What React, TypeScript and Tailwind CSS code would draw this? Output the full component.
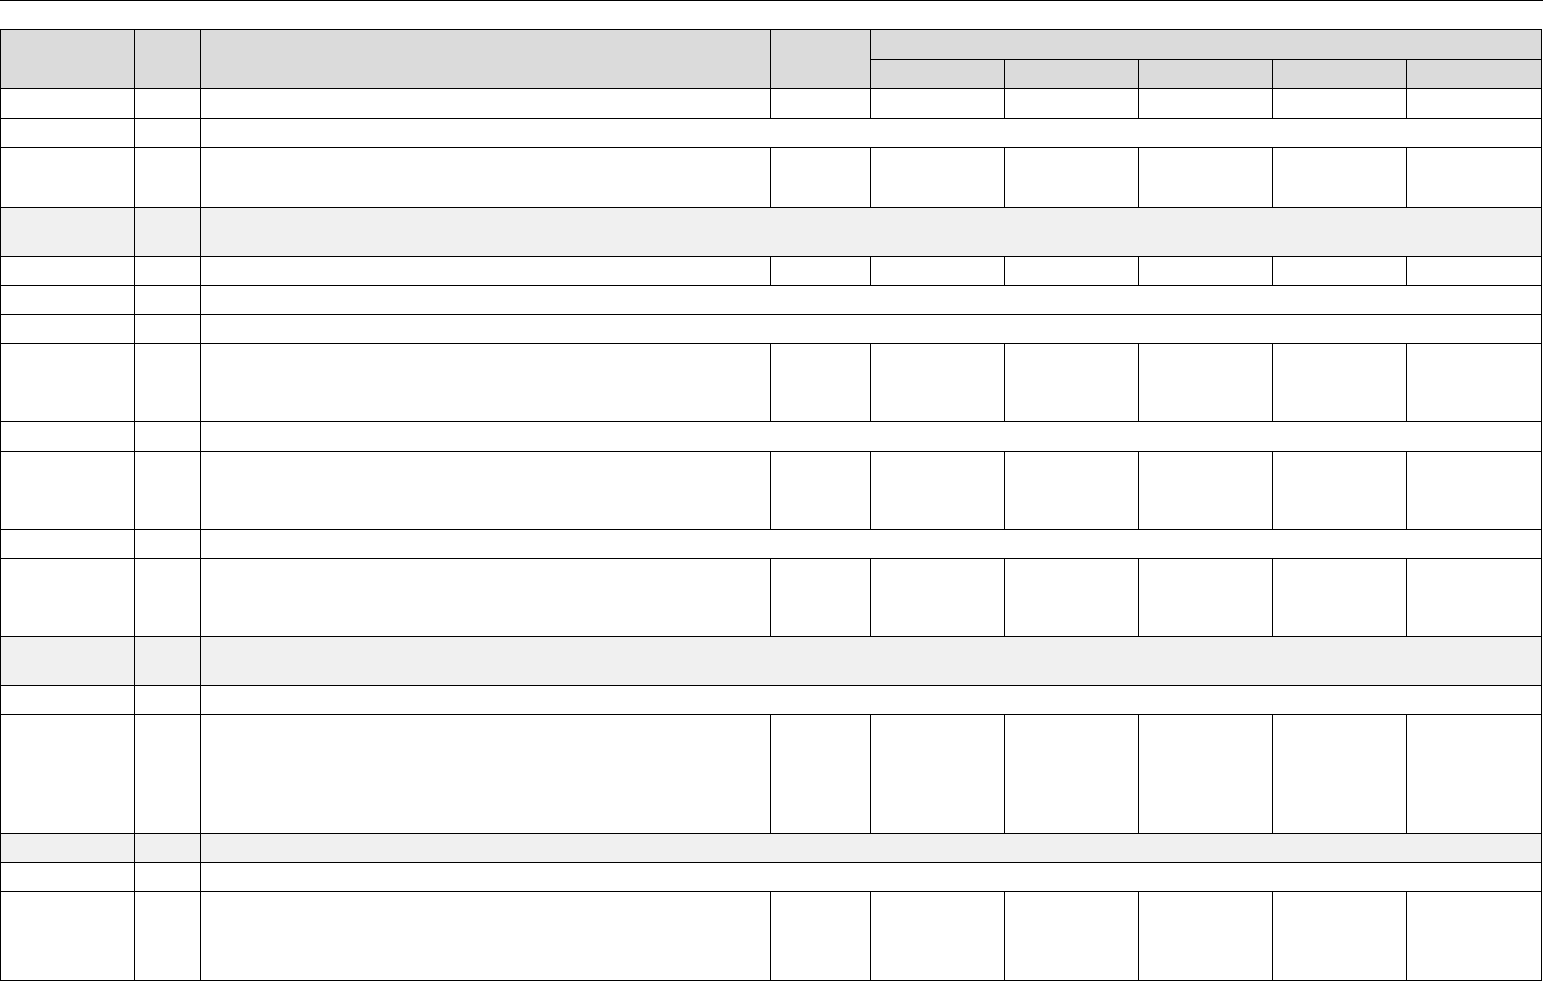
import React from "react";

// row kinds: "full" = every column has its own cell, "span" = first two cells then one wide cell
type Row = { h: number; kind: "full" | "span"; shaded?: boolean };

const rows: Row[] = [
  { h: 30, kind: "full" },
  { h: 29, kind: "span" },
  { h: 60, kind: "full" },
  { h: 49, kind: "span", shaded: true },
  { h: 29, kind: "full" },
  { h: 29, kind: "span" },
  { h: 29, kind: "span" },
  { h: 78, kind: "full" },
  { h: 30, kind: "span" },
  { h: 78, kind: "full" },
  { h: 29, kind: "span" },
  { h: 78, kind: "full" },
  { h: 49, kind: "span", shaded: true },
  { h: 29, kind: "span" },
  { h: 119, kind: "full" },
  { h: 29, kind: "span", shaded: true },
  { h: 29, kind: "span" },
  { h: 89, kind: "full" },
];

const colWidths = [134, 66, 570, 100, 134, 134, 134, 134, 135];

const cell = "border border-black p-0";

export default function App() {
  return (
    <div className="w-[1544px] bg-white font-['Liberation_Sans',Arial,sans-serif] text-sm text-black">
      {/* top rule */}
      <div className="h-px w-[1543px] bg-black" />

      <table className="mt-[28px] w-[1541px] table-fixed border-collapse">
        <colgroup>
          {colWidths.map((w, i) => (
            <col key={i} style={{ width: w }} />
          ))}
        </colgroup>

        <thead className="bg-[#dbdbdb]">
          <tr className="h-[30px]">
            <th rowSpan={2} className={cell} />
            <th rowSpan={2} className={cell} />
            <th rowSpan={2} className={cell} />
            <th rowSpan={2} className={cell} />
            <th colSpan={5} className={cell} />
          </tr>
          <tr className="h-[29px]">
            <th className={cell} />
            <th className={cell} />
            <th className={cell} />
            <th className={cell} />
            <th className={cell} />
          </tr>
        </thead>

        <tbody>
          {rows.map((row, i) => (
            <tr
              key={i}
              className={row.shaded ? "bg-[#f0f0f0]" : "bg-white"}
              style={{ height: row.h }}
            >
              <td className={cell} />
              <td className={cell} />
              {row.kind === "span" ? (
                <td colSpan={7} className={cell} />
              ) : (
                <>
                  <td className={cell} />
                  <td className={cell} />
                  <td className={cell} />
                  <td className={cell} />
                  <td className={cell} />
                  <td className={cell} />
                  <td className={cell} />
                </>
              )}
            </tr>
          ))}
        </tbody>
      </table>
    </div>
  );
}
